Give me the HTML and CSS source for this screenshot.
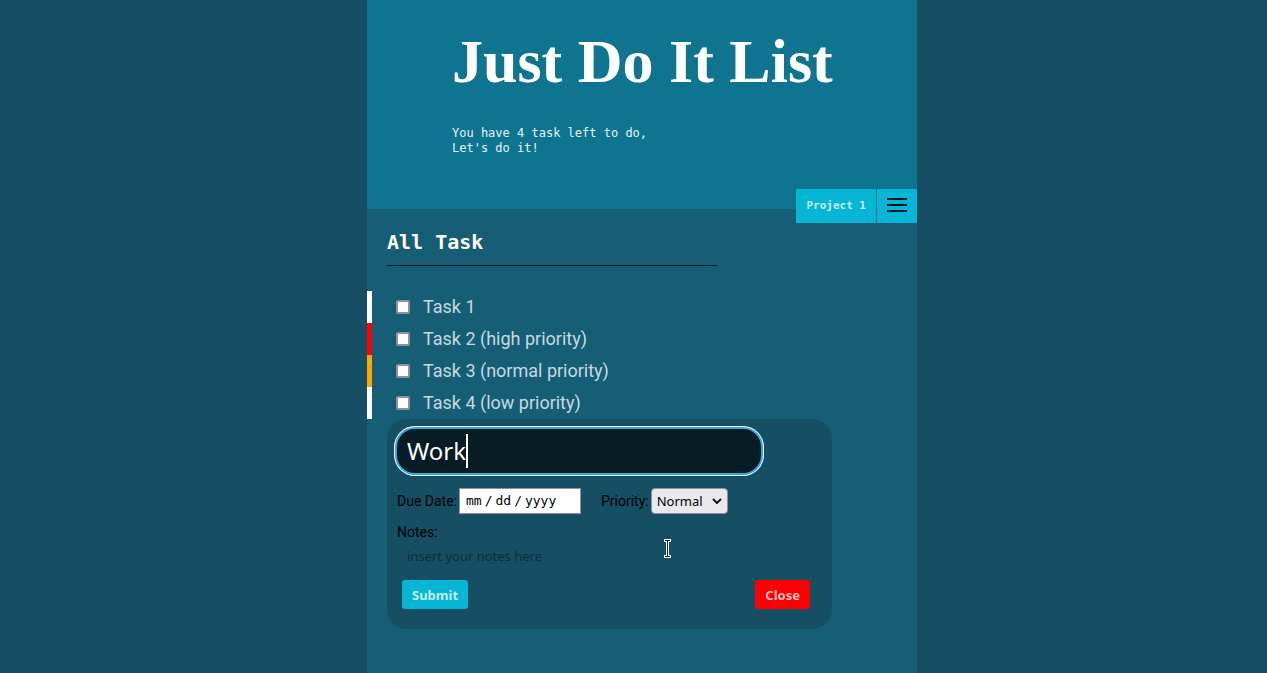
FILE: index.html
```html
<!DOCTYPE html>
<html lang="en">
<head>
<meta charset="utf-8">
<meta name="viewport" content="width=device-width, initial-scale=1">
<title>Just Do It List</title>
<link rel="stylesheet" href="styles.css">
</head>
<body>
<div class="app">
  <header class="header">
    <h1 class="title">Just Do It List</h1>
    <p class="summary">You have 4 task left to do,<br>Let's do it!</p>
    <nav class="tabs">
      <button class="tab" type="button">Project 1</button>
      <button class="tab tab-menu" type="button" aria-label="Menu">
        <svg width="20" height="18" viewBox="0 0 20 18" stroke="#081c23" stroke-width="2"><path d="M0 2h20M0 8h20M0 14h20"/></svg>
      </button>
    </nav>
  </header>
  <main class="main">
    <h2 class="heading">All Task</h2>
    <ul class="tasks">
      <li class="task"><input class="check" type="checkbox" id="t1"><label for="t1">Task 1</label></li>
      <li class="task high"><input class="check" type="checkbox" id="t2"><label for="t2">Task 2 (high priority)</label></li>
      <li class="task normal"><input class="check" type="checkbox" id="t3"><label for="t3">Task 3 (normal priority)</label></li>
      <li class="task"><input class="check" type="checkbox" id="t4"><label for="t4">Task 4 (low priority)</label></li>
    </ul>
    <form class="card">
      <div class="name-wrap">
        <input class="name" type="text" value="Work" aria-label="Task name">
        <span class="caret"></span>
      </div>
      <div class="fields">
        <div class="field">
          <label for="due">Due Date:</label>
          <input class="date" type="date" id="due">
        </div>
        <div class="field">
          <label for="priority">Priority:</label>
          <span class="select-wrap">
            <select class="select" id="priority"><option>Low</option><option selected>Normal</option><option>High</option></select>
            <svg class="chevron" width="10" height="6" viewBox="0 0 10 6" fill="none" stroke="#15141a" stroke-width="2"><path d="M1 1l4 4 4-4"/></svg>
          </span>
        </div>
      </div>
      <label class="notes-label" for="notes">Notes:</label>
      <textarea class="notes" id="notes" rows="1" placeholder="insert your notes here"></textarea>
      <div class="actions">
        <button class="btn submit" type="button">Submit</button>
        <button class="btn close" type="button">Close</button>
      </div>
      <svg class="pointer" width="9" height="21" viewBox="0 0 9 21"><path d="M1 1h7v3H6v13h2v3H1v-3h2V4H1z" fill="#fff"/><path d="M2 2h5v1H5v15h2v1H2v-1h2V3H2z" fill="#222"/></svg>
    </form>
  </main>
</div>
</body>
</html>
```

FILE: styles.css
```css
* { box-sizing: border-box; }

body {
  margin: 0;
  padding-left: 17px;
  background: #164e63;
  font-family: Roboto, sans-serif;
}

.app {
  display: flex;
  flex-direction: column;
  max-width: 550px;
  min-height: 100vh;
  margin: 0 auto;
  background: #155e75;
}

.header {
  position: relative;
  padding: 25px 20px 53px 85px;
  background: #0e7490;
  color: #fff;
}

.title {
  margin: 0 0 29px;
  font: bold 62px/72px "Liberation Serif", serif;
}

.summary {
  margin: 0;
  color: #e3f4f7;
  font: 12px/15px "DejaVu Sans Mono", monospace;
}

.tabs {
  position: absolute;
  right: 0;
  bottom: -14px;
  display: flex;
  gap: 1px;
}

.tab {
  height: 34px;
  padding: 0 10px;
  border: 0;
  background: #06b6d4;
  color: #c1edf5;
  font: bold 11px/14px "DejaVu Sans Mono", monospace;
}

.tab-menu { display: flex; align-items: center; }

.main { padding: 20px; }

.heading {
  max-width: 330px;
  margin: 0 0 25px;
  padding-bottom: 10px;
  border-bottom: 1px solid #081c23;
  color: #fff;
  font: bold 20px/26px "DejaVu Sans Mono", monospace;
}

.tasks { margin: 0 -20px; padding: 0; list-style: none; }

.task {
  display: flex;
  align-items: center;
  gap: 13px;
  height: 32px;
  padding-left: 24px;
  border-left: 5px solid #fff;
  color: #c5dbe0;
  font-size: 18px;
  line-height: 24px;
}

.high { border-left-color: red; }
.normal { border-left-color: orange; }

.check {
  appearance: none;
  width: 14px;
  height: 14px;
  margin: 0;
  border: 2px solid #8f8f9d;
  border-radius: 2px;
  background: #fff;
}

.card {
  position: relative;
  max-width: 445px;
  padding: 10px;
  border-radius: 20px;
  background: #164e63;
  color: #000;
  font-size: 14px;
}

.name-wrap { position: relative; margin-right: 61px; }

.name {
  display: block;
  width: 100%;
  height: 44px;
  padding: 0 10px 2px;
  border: 0;
  border-radius: 18px;
  outline: 0;
  box-shadow: 0 0 0 2px #33a5e9, 0 0 0 3px #fff;
  background: #081c23;
  color: #fff;
  font: 24px/32px "Noto Sans", sans-serif;
}

.caret {
  position: absolute;
  top: 5px;
  left: 69px;
  width: 2px;
  height: 34px;
  background: #fff;
}

.fields { display: flex; gap: 20px; margin-top: 15px; }
.field { display: flex; align-items: center; gap: 2px; }

.date {
  width: 122px;
  height: 26px;
  padding: 0 5px;
  border: 1px solid #8f8f9d;
  background: #fff;
  color: #000;
  font: 13px/18px "DejaVu Sans Mono", monospace;
}

.date::-webkit-calendar-picker-indicator { display: none; }
.date::-webkit-datetime-edit-text { padding: 0 2px; }

.select-wrap { position: relative; }

.select {
  appearance: none;
  display: block;
  width: 77px;
  height: 26px;
  padding: 0 5px;
  border: 1px solid #8f8f9d;
  border-radius: 4px;
  background: #e9e9ed;
  color: #000;
  font: 13px/18px "Noto Sans", sans-serif;
}

.chevron { position: absolute; top: 10px; right: 6px; pointer-events: none; }

.notes-label { display: block; margin-top: 10px; line-height: 16px; }

.notes {
  display: block;
  width: 100%;
  height: 32px;
  padding: 7px 10px;
  border: 0;
  background: transparent;
  resize: none;
  font: 13px/18px "Noto Sans", sans-serif;
}

.notes::placeholder { color: #0d2f3b; }

.actions {
  display: flex;
  justify-content: space-between;
  padding: 8px 12px 10px 5px;
}

.btn {
  height: 29px;
  padding: 0 10px;
  border: 0;
  border-radius: 3px;
  font: bold 13px/18px "Noto Sans", sans-serif;
}

.submit { background: #06b6d4; color: #c1edf5; }
.close { background: red; color: #ffbfbf; }

.pointer { position: absolute; top: 119px; left: 276px; }
```
